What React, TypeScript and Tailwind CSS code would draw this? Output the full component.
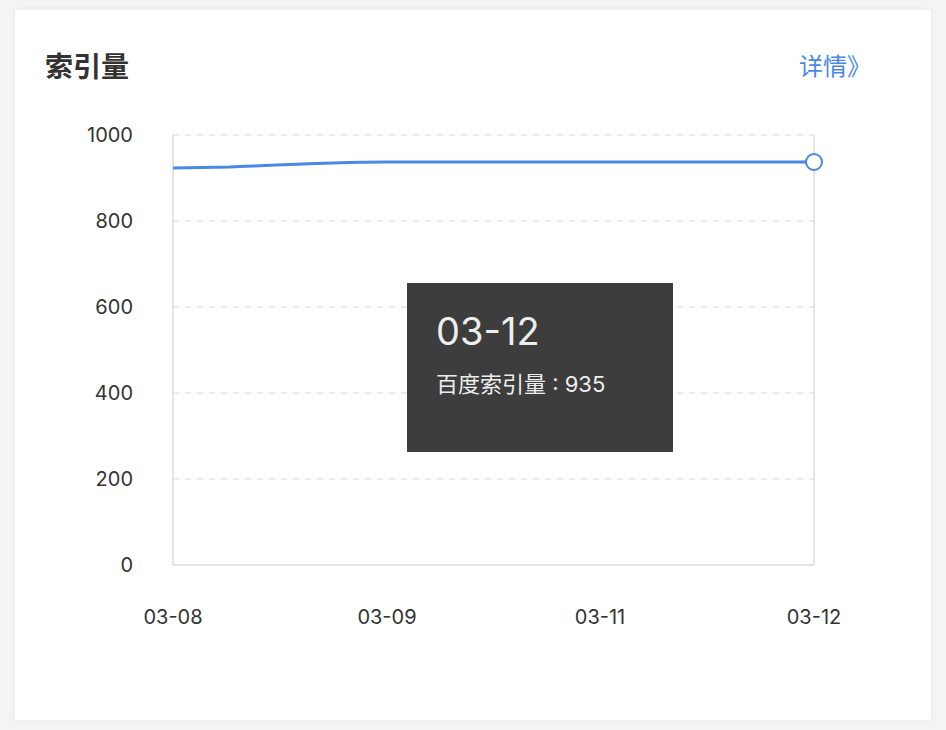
export default function App() {
  const grid = [1000, 800, 600, 400, 200, 0];
  const y = (v: number) => 565 - v * 0.43;
  const xs = [173, 387, 600, 814];
  const labels = ["03-08", "03-09", "03-11", "03-12"];
  return (
    <div className="w-[946px] h-[730px] bg-[#f4f4f4] pt-[10px] pl-[15px]" style={{ fontFamily: "Inter, 'Noto Sans CJK SC', sans-serif" }}>
      <div className="relative w-[916px] h-[710px] bg-white shadow-[0_0_6px_rgba(0,0,0,0.06)]">
        <div className="flex items-center justify-between pl-[30px] pr-[60px] pt-[38px]">
          <div className="text-[28px] font-bold text-[#333] leading-[38px]">索引量</div>
          <div className="text-[24px] text-[#4a88e6] leading-[38px]">详情》</div>
        </div>
        <svg className="absolute left-0 top-0" width="916" height="710" viewBox="15 10 916 710">
          {grid.map((g) => (
            <g key={g}>
              {g !== 0 && <line x1={173} x2={814} y1={y(g)} y2={y(g)} stroke="#d9d9d9" strokeDasharray="6 6" />}
              <text x={133} y={y(g) + 7} textAnchor="end" fontSize="20" fill="#333" fontFamily="Inter, sans-serif">{g}</text>
            </g>
          ))}
          <line x1={173} x2={173} y1={135} y2={565} stroke="#ccc" />
          <line x1={814} x2={814} y1={135} y2={565} stroke="#ccc" />
          <line x1={173} x2={814} y1={565} y2={565} stroke="#ccc" />
          {xs.map((x, i) => (
            <text key={i} x={x} y={624} textAnchor="middle" fontSize="20" fill="#333" fontFamily="Inter, sans-serif">{labels[i]}</text>
          ))}
          <path d="M173 168 L230 167 C300 164 340 162 387 162 L814 162" fill="none" stroke="#4a88e6" strokeWidth="3" />
          <circle cx={814} cy={162} r={8} fill="#fff" stroke="#4a88e6" strokeWidth="2" />
        </svg>
        <div className="absolute left-[392px] top-[273px] w-[266px] h-[169px] bg-[#333]/95 pl-[29px] pt-[22px] text-[#eee]">
          <div className="text-[38px] leading-[52px]">03-12</div>
          <div className="text-[22px] mt-[12px] leading-[30px]">百度索引量 : 935</div>
        </div>
      </div>
    </div>
  );
}
